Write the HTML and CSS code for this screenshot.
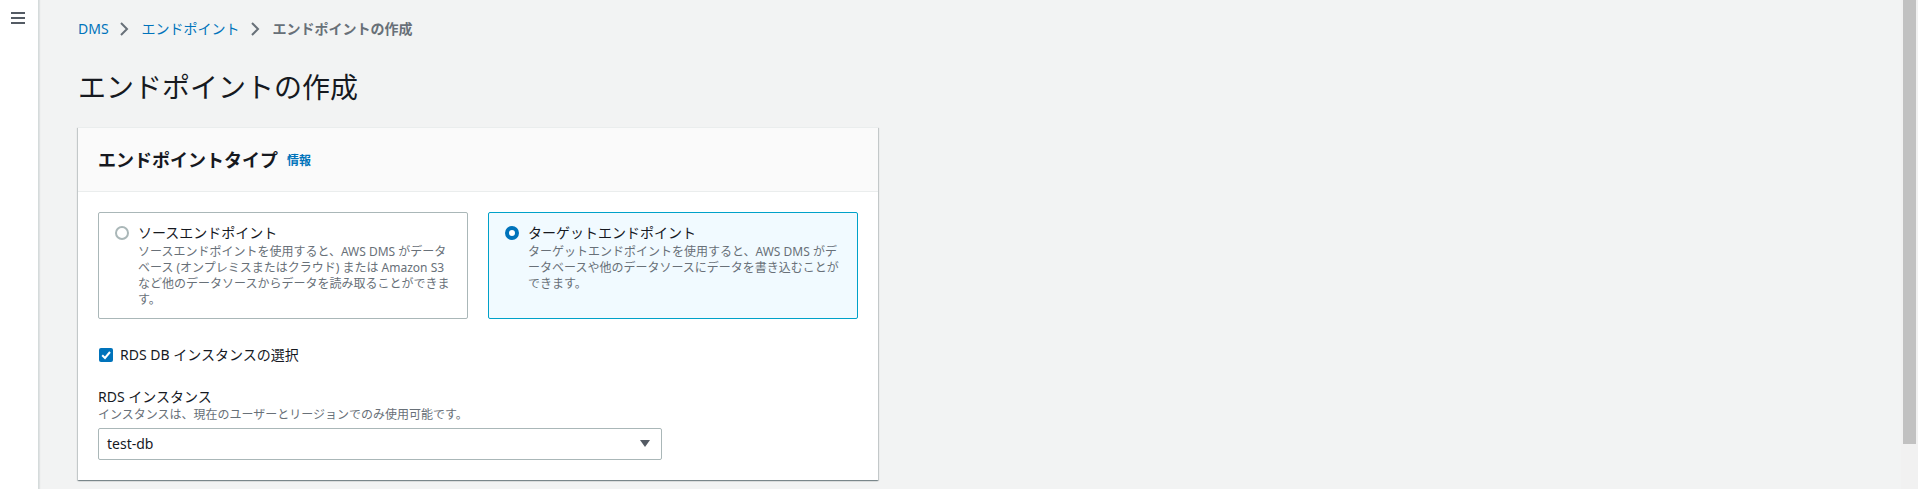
FILE: index.html
```html
<!DOCTYPE html>
<html lang="ja">
<head>
<meta charset="utf-8">
<title>エンドポイントの作成</title>
<link rel="stylesheet" href="styles.css">
</head>
<body>
  <nav class="sidebar">
    <button class="menu-btn" aria-label="メニュー">
      <svg width="14" height="12" viewBox="0 0 14 12"><rect x="0" y="0" width="14" height="2" fill="#545b64"/><rect x="0" y="5" width="14" height="2" fill="#545b64"/><rect x="0" y="10" width="14" height="2" fill="#545b64"/></svg>
    </button>
  </nav>
  <main class="main">
    <div class="breadcrumbs">
      <a class="crumb-link" href="#">DMS</a>
      <svg class="chev" width="16" height="16" viewBox="0 0 16 16"><polyline points="5,2 11,8 5,14" fill="none" stroke="#687078" stroke-width="2"/></svg>
      <a class="crumb-link" href="#">エンドポイント</a>
      <svg class="chev" width="16" height="16" viewBox="0 0 16 16"><polyline points="5,2 11,8 5,14" fill="none" stroke="#687078" stroke-width="2"/></svg>
      <span class="crumb-current">エンドポイントの作成</span>
    </div>
    <h1 class="page-title">エンドポイントの作成</h1>
    <section class="card">
      <header class="card-header">
        <h2 class="card-title">エンドポイントタイプ</h2>
        <a class="info-link" href="#">情報</a>
      </header>
      <div class="card-body">
        <div class="tiles">
          <label class="tile">
            <span class="radio"></span>
            <span class="tile-text">
              <span class="tile-label">ソースエンドポイント</span>
              <span class="tile-desc">ソースエンドポイントを使用すると、AWS DMS がデータ<br>ベース (オンプレミスまたはクラウド) または Amazon S3<br>など他のデータソースからデータを読み取ることができま<br>す。</span>
            </span>
          </label>
          <label class="tile tile-selected">
            <span class="radio radio-checked"></span>
            <span class="tile-text">
              <span class="tile-label">ターゲットエンドポイント</span>
              <span class="tile-desc">ターゲットエンドポイントを使用すると、AWS DMS がデ<br>ータベースや他のデータソースにデータを書き込むことが<br>できます。</span>
            </span>
          </label>
        </div>
        <label class="check-row">
          <span class="checkbox">
            <svg width="14" height="14" viewBox="0 0 14 14"><polyline points="3.2,7.2 6,10 11,4" fill="none" stroke="#fff" stroke-width="2"/></svg>
          </span>
          <span class="check-label">RDS DB インスタンスの選択</span>
        </label>
        <div class="field">
          <div class="field-label">RDS インスタンス</div>
          <div class="field-desc">インスタンスは、現在のユーザーとリージョンでのみ使用可能です。</div>
          <div class="select">
            <span class="select-value">test-db</span>
            <svg width="10" height="8" viewBox="0 0 10 8"><polygon points="0,0 10,0 5,7" fill="#545b64"/></svg>
          </div>
        </div>
      </div>
    </section>
  </main>
  <div class="scrollbar"><div class="thumb"></div></div>
</body>
</html>
```

FILE: styles.css
```css
html, body {
  margin: 0;
  padding: 0;
  height: 100%;
}
body {
  display: flex;
  overflow: hidden;
  background: #f2f3f3;
  font-family: "Noto Sans", "Noto Sans CJK JP", sans-serif;
  color: #16191f;
  font-size: 14px;
}
.sidebar {
  width: 38px;
  flex: none;
  background: #ffffff;
  border-right: 1px solid #d5dbdb;
  box-shadow: 1px 0 1px rgba(0, 28, 36, 0.08);
}
.menu-btn {
  display: block;
  border: none;
  background: none;
  padding: 0;
  margin: 12px 0 0 11px;
  width: 14px;
  height: 12px;
  line-height: 0;
}
.main {
  flex: 1;
  min-width: 0;
  padding: 19px 0 0 39px;
}
.breadcrumbs {
  display: flex;
  align-items: center;
  height: 20px;
  font-size: 14px;
  line-height: 20px;
}
.crumb-link {
  color: #0073bb;
  text-decoration: none;
}
.chev {
  margin: 0 10px 0 7px;
  flex: none;
}
.crumb-current {
  color: #687078;
  font-weight: 700;
}
.page-title {
  margin: 30px 0 0 0;
  font-size: 28px;
  line-height: 36px;
  font-weight: 400;
  color: #16191f;
}
.card {
  margin-top: 22px;
  width: 800px;
  background: #ffffff;
  box-shadow: 0 1px 1px 0 rgba(0, 28, 36, 0.3), 1px 1px 1px 0 rgba(0, 28, 36, 0.15), -1px 1px 1px 0 rgba(0, 28, 36, 0.15);
  border-top: 1px solid #eaeded;
}
.card-header {
  display: flex;
  align-items: center;
  height: 63px;
  padding: 0 20px;
  background: #fafafa;
  border-bottom: 1px solid #eaeded;
}
.card-title {
  margin: 0;
  font-size: 18px;
  line-height: 22px;
  font-weight: 700;
  color: #16191f;
}
.info-link {
  margin-left: 9px;
  font-size: 12px;
  font-weight: 700;
  color: #0073bb;
  text-decoration: none;
  line-height: 16px;
  padding-top: 3px;
}
.card-body {
  padding: 20px 20px 20px 20px;
}
.tiles {
  display: grid;
  grid-template-columns: 1fr 1fr;
  gap: 20px;
}
.tile {
  display: flex;
  align-items: flex-start;
  border: 1px solid #aab7b8;
  border-radius: 2px;
  padding: 9px 16px 10px 16px;
  background: #ffffff;
}
.tile-selected {
  background: #f1faff;
  border-color: #00a1c9;
}
.radio {
  flex: none;
  box-sizing: border-box;
  width: 14px;
  height: 14px;
  margin-top: 4px;
  margin-right: 9px;
  border-radius: 50%;
  border: 2px solid #aab7b8;
  background: #ffffff;
}
.radio-checked {
  border: 4px solid #0073bb;
}
.tile-text {
  display: flex;
  flex-direction: column;
}
.tile-label {
  font-size: 14px;
  line-height: 22px;
  color: #16191f;
}
.tile-desc {
  font-size: 12px;
  line-height: 16px;
  color: #687078;
  white-space: nowrap;
}
.check-row {
  display: flex;
  align-items: center;
  margin-top: 25px;
  height: 22px;
}
.checkbox {
  flex: none;
  width: 14px;
  height: 14px;
  margin-left: 1px;
  margin-right: 7px;
  border-radius: 2px;
  background: #0073bb;
  line-height: 0;
}
.check-label {
  font-size: 14px;
  line-height: 22px;
  color: #16191f;
}
.field {
  margin-top: 21px;
}
.field-label {
  font-size: 14px;
  line-height: 20px;
  color: #16191f;
}
.field-desc {
  font-size: 12px;
  line-height: 16px;
  color: #687078;
}
.select {
  margin-top: 5px;
  width: 564px;
  height: 32px;
  box-sizing: border-box;
  display: flex;
  align-items: center;
  justify-content: space-between;
  border: 1px solid #aab7b8;
  border-radius: 2px;
  padding: 0 11px 0 8px;
  background: #ffffff;
}
.select-value {
  font-size: 14px;
  line-height: 22px;
  color: #16191f;
}
.scrollbar {
  flex: none;
  width: 17px;
  background: #f1f1f1;
}
.thumb {
  margin: 0 2px;
  height: 444px;
  background: #c1c1c1;
}
```
